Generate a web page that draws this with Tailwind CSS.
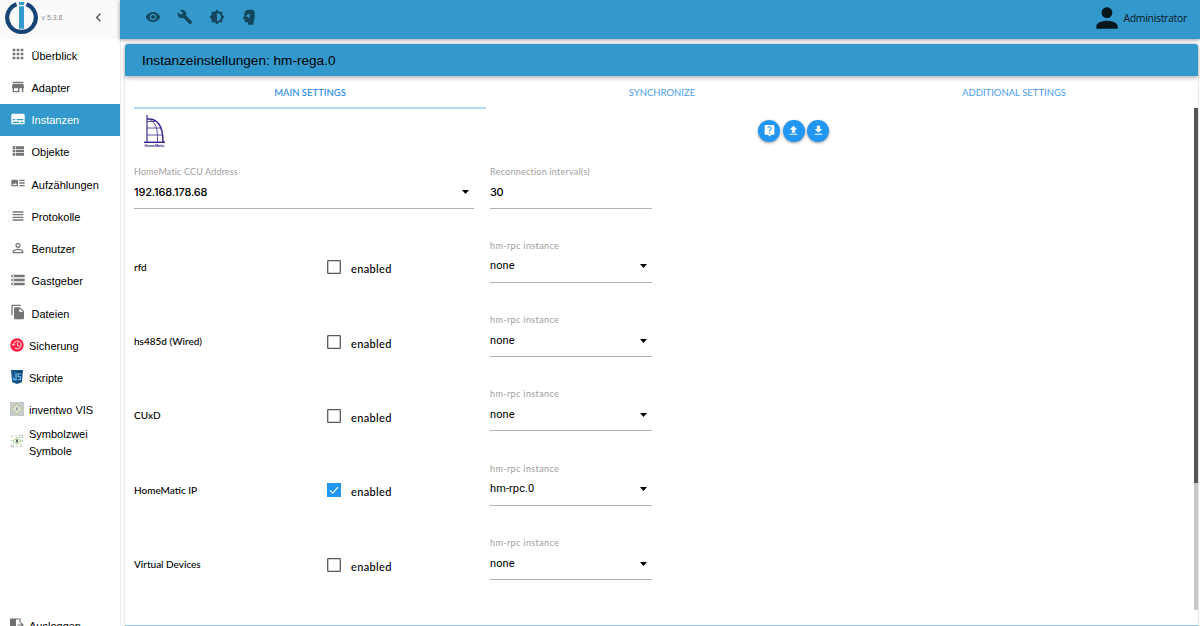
<!DOCTYPE html>
<html lang="de">
<head>
    <meta charset="UTF-8">
    <meta name="viewport" content="width=device-width, initial-scale=1.0">
    <title>ioBroker - hm-rega.0</title>
    <script src="https://cdn.jsdelivr.net/npm/@tailwindcss/browser@4"></script>
</head>
<body class="flex h-[626px] w-[1200px] overflow-hidden bg-white font-['Liberation_Sans',Arial,sans-serif] text-black">

    <!-- Sidebar -->
    <aside class="flex h-full w-[120px] shrink-0 flex-col">
        <div class="flex h-[39px] shrink-0 items-center bg-[#fafafa] pb-1 pl-[5px]">
            <svg class="h-[34px] w-[33px] shrink-0" viewBox="0 0 33 34">
                <path d="M11.5 3.2A14.3 14.3 0 1 0 21.5 3.2" fill="none" stroke="#164477" stroke-width="4.2"/>
                <path d="M14 1h5v3h-5zM14 5.2h5v22.6h-5z" fill="#3399cc"/>
            </svg>
            <span class="mt-px ml-[3.5px] text-[7px] text-[#8a8a8a]">v 5.3.8</span>
            <svg class="ml-[27px] size-[17px] fill-[#555]" viewBox="0 0 24 24"><path d="M15.41 7.41L14 6l-6 6 6 6 1.41-1.41L10.83 12z"/></svg>
        </div>

        <nav class="flex flex-col text-[11px]">
            <a class="flex h-[32.25px] items-center pt-[1.5px] pl-[10px]">
                <svg class="-mt-[3px] mr-[5.5px] size-4 fill-[#757575]" viewBox="0 0 24 24"><path d="M4 8h4V4H4v4zm6 12h4v-4h-4v4zm-6 0h4v-4H4v4zm0-6h4v-4H4v4zm6 0h4v-4h-4v4zm6-10v4h4V4h-4zm-6 4h4V4h-4v4zm6 6h4v-4h-4v4zm0 6h4v-4h-4v4z"/></svg>
                Überblick
            </a>
            <a class="flex h-[32.25px] items-center pt-[1.5px] pl-[10px]">
                <svg class="-mt-[3px] mr-[5.5px] size-4 fill-[#757575]" viewBox="0 0 24 24"><path d="M20 4H4v2h16V4zm1 10v-2l-1-5H4l-1 5v2h1v6h10v-6h4v6h2v-6h1zm-9 4H6v-4h6v4z"/></svg>
                Adapter
            </a>
            <a class="flex h-[32.25px] items-center bg-[#3399cc] pt-[1.5px] pl-[10px] text-white">
                <svg class="-mt-[3px] mr-[5.5px] size-4 fill-white" viewBox="0 0 24 24"><path d="M20 4H4c-1.1 0-2 .9-2 2v12c0 1.1.9 2 2 2h16c1.1 0 2-.9 2-2V6c0-1.1-.9-2-2-2zM4 12h4v2H4v-2zm10 6H4v-2h10v2zm6 0h-4v-2h4v2zm0-4H10v-2h10v2z"/></svg>
                Instanzen
            </a>
            <a class="flex h-[32.25px] items-center pt-[1.5px] pl-[10px]">
                <svg class="-mt-[3px] mr-[5.5px] size-4 fill-[#757575]" viewBox="0 0 24 24"><path d="M4 14h4v-4H4v4zm0 5h4v-4H4v4zM4 9h4V5H4v4zm5 5h12v-4H9v4zm0 5h12v-4H9v4zM9 5v4h12V5H9z"/></svg>
                Objekte
            </a>
            <a class="flex h-[32.25px] items-center pt-[1.5px] pl-[10px]">
                <svg class="-mt-[3px] mr-[5.5px] size-4 fill-[#757575]" viewBox="0 0 24 24"><path d="M22 13h-8v-2h8v2zm0-6h-8v2h8V7zm-8 10h8v-2h-8v2zm-2-8v6c0 1.1-.9 2-2 2H4c-1.1 0-2-.9-2-2V9c0-1.1.9-2 2-2h6c1.1 0 2 .9 2 2zm-1.5 6l-2.25-3-1.75 2.26-1.25-1.51L3.5 15h7z"/></svg>
                Aufzählungen
            </a>
            <a class="flex h-[32.25px] items-center pt-[1.5px] pl-[10px]">
                <svg class="-mt-[3px] mr-[5.5px] size-4 fill-[#757575]" viewBox="0 0 24 24"><path d="M4 15h16v-2H4v2zm0 4h16v-2H4v2zm0-8h16V9H4v2zm0-6v2h16V5H4z"/></svg>
                Protokolle
            </a>
            <a class="flex h-[32.25px] items-center pt-[1.5px] pl-[10px]">
                <svg class="-mt-[3px] mr-[5.5px] size-4 fill-[#757575]" viewBox="0 0 24 24"><path d="M12 5.9c1.16 0 2.1.94 2.1 2.1s-.94 2.1-2.1 2.1S9.9 9.16 9.9 8s.94-2.1 2.1-2.1m0 9c2.97 0 6.1 1.46 6.1 2.1v1.1H5.9V17c0-.64 3.13-2.1 6.1-2.1M12 4C9.79 4 8 5.79 8 8s1.79 4 4 4 4-1.79 4-4-1.79-4-4-4zm0 9c-2.67 0-8 1.34-8 4v3h16v-3c0-2.66-5.33-4-8-4z"/></svg>
                Benutzer
            </a>
            <a class="flex h-[32.25px] items-center pt-[1.5px] pl-[10px]">
                <svg class="-mt-[3px] mr-[5.5px] size-4 fill-[#757575]" viewBox="0 0 24 24"><path d="M2 20h20v-4H2v4zm2-3h2v2H4v-2zM2 4v4h20V4H2zm4 3H4V5h2v2zm-4 7h20v-4H2v4zm2-3h2v2H4v-2z"/></svg>
                Gastgeber
            </a>
            <a class="flex h-[32.25px] items-center pt-[1.5px] pl-[10px]">
                <svg class="-mt-[3px] mr-[5.5px] size-4 fill-[#757575]" viewBox="0 0 24 24"><path d="M16 1H4c-1.1 0-2 .9-2 2v14h2V3h12V1zm-1 4l6 6v10c0 1.1-.9 2-2 2H7.99C6.89 23 6 22.1 6 21l.01-14c0-1.1.89-2 1.99-2h7zm-1 7h5.5L14 6.5V12z"/></svg>
                Dateien
            </a>
            <a class="flex h-[32.25px] items-center pt-[1.5px] pl-[10px]">
                <svg class="-mt-[3px] mr-[5px] size-[14px]" viewBox="0 0 28 28">
                    <circle cx="14" cy="14" r="13.5" fill="#fc1c44"/>
                    <path d="M7 14a7.7 7.7 0 1 1 2.6 5.7M4 12.5l3 3 3-3M15 9.5v5l4 2.3" fill="none" stroke="#fff" stroke-width="1.8"/>
                </svg>
                Sicherung
            </a>
            <a class="flex h-[32.25px] items-center pt-[1.5px] pl-[10px]">
                <svg class="-mt-[3px] mr-[5px] size-[14px]" viewBox="0 0 28 28">
                    <path d="M2 0h24l-2.2 24.5L14 28l-9.8-3.5z" fill="#16588f"/>
                    <path d="M14 2h10l-1.8 21L14 26z" fill="#0d4577"/>
                    <path d="M12 6v13H7v-4M22 7.5h-6v5.5h5v6h-6" fill="none" stroke="#6cb5e6" stroke-width="2.5"/>
                </svg>
                Skripte
            </a>
            <a class="flex h-[32.25px] items-center pt-[1.5px] pl-[10px]">
                <svg class="-mt-[3px] mr-[5px] size-[14px]" viewBox="0 0 28 28">
                    <path d="M.5.5h27v27H.5z" fill="#cbcbcb" stroke="#adadad"/>
                    <path d="M14 4l10 10-10 10L4 14z" fill="#dfe2d9" stroke="#9bd066" stroke-width="1.5"/>
                    <path d="M13 11h2v6h-2z" fill="#666"/>
                </svg>
                inventwo VIS
            </a>
            <a class="flex h-[32.25px] items-center pt-[1.5px] pl-[10px] leading-[17px]">
                <svg class="-mt-[3px] mr-[5px] size-[14px] shrink-0" viewBox="0 0 28 28">
                    <path d="M2 3l2 3 2-3M10 4h4M19 2h6v5h-6zM2 22h5v4H2zM11 25h5M20 26l2-5 2 5M1 13h4M24 11v5" fill="none" stroke="#b5b5b5" stroke-width="1.5"/>
                    <path d="M14 7l8 7-8 7-8-7z" fill="#f2f9ea" stroke="#9bd066" stroke-width="2"/>
                    <path d="M12.5 11h3v6h-3z" fill="#333"/>
                </svg>
                <span>Symbolzwei Symbole</span>
            </a>
        </nav>

        <a class="mt-auto -mb-[16px] flex h-8 shrink-0 items-center pl-[10px] text-[11px]">
            <svg class="-mt-[3px] mr-[5px] size-[14px]" viewBox="0 0 28 28">
                <path d="M0 1h12v25H0z" fill="#707070"/>
                <path d="M12 2h8v7M20 19v6h-8M15 14h10M21 9.5l5 4.5-5 4.5" fill="none" stroke="#707070" stroke-width="2.2"/>
            </svg>
            Ausloggen
        </a>
    </aside>

    <div class="flex min-w-0 grow flex-col border-l border-[#ededed]">
        <!-- Toolbar -->
        <header class="z-10 -ml-px flex h-[39px] shrink-0 items-center bg-[#3399cc] pr-[13px] pb-[5px] pl-[24.5px] shadow-[0_1px_4px_rgba(0,0,0,0.4)]">
            <div class="flex gap-4 fill-[#14475e]">
                <svg class="size-4" viewBox="0 0 24 24"><path d="M12 4.5C7 4.5 2.73 7.61 1 12c1.73 4.39 6 7.5 11 7.5s9.27-3.11 11-7.5c-1.73-4.39-6-7.5-11-7.5zM12 17c-2.76 0-5-2.24-5-5s2.24-5 5-5 5 2.24 5 5-2.24 5-5 5zm0-8c-1.66 0-3 1.34-3 3s1.34 3 3 3 3-1.34 3-3-1.34-3-3-3z"/></svg>
                <svg class="size-4" viewBox="0 0 24 24"><path d="M22.7 19l-9.1-9.1c.9-2.3.4-5-1.5-6.9-2-2-5-2.4-7.4-1.3L9 6 6 9 1.6 4.7C.4 7.1.9 10.1 2.9 12.1c1.9 1.9 4.6 2.4 6.9 1.5l9.1 9.1c.4.4 1 .4 1.4 0l2.3-2.3c.5-.4.5-1.1.1-1.4z"/></svg>
                <svg class="size-4" viewBox="0 0 24 24"><path d="M20 15.31L23.31 12 20 8.69V4h-4.69L12 .69 8.69 4H4v4.69L.69 12 4 15.31V20h4.69L12 23.31 15.31 20H20v-4.69zM12 18V6c3.31 0 6 2.69 6 6s-2.69 6-6 6z"/></svg>
                <svg class="size-4" viewBox="0 0 24 24"><path fill-rule="evenodd" d="M11.5 1H16c3 0 4.500 2 4.500 5v6c0 2.500-.5 4-1.500 5.500V23.500h-8.500V20H8c-1.500 0-2.500-.8-2.500-2v-3H2.500L5 10V8c0-4 2.500-7 6.500-7zM8 8.500v3h2.500l1 1.500h1.500v-6h-1.500l-1 1.500z"/></svg>
            </div>
            <div class="ml-auto flex items-center font-['Open_Sans','Noto_Sans',sans-serif]">
                <svg class="mt-px size-8 fill-[#07151c]" viewBox="0 0 24 24"><path d="M12 12c2.21 0 4-1.79 4-4s-1.79-4-4-4-4 1.79-4 4 1.79 4 4 4zm0 2c-2.67 0-8 1.34-8 4v2h16v-2c0-2.66-5.33-4-8-4z"/></svg>
                <span class="mt-1 text-[10.5px] tracking-[-0.32px] text-[#07151c]">Administrator</span>
            </div>
        </header>

        <!-- Instance settings card -->
        <main class="mt-[5px] mr-[2px] ml-1 flex h-[582px] flex-col rounded-t-[3px] border-b border-[#90caf9] shadow-[0_0_2px_rgba(0,0,0,0.3)]">
            <h1 class="flex h-8 shrink-0 items-center rounded-t-[3px] bg-[#3399cc] pt-0.5 pl-[17px] text-[13.6px] shadow-[0_2px_4px_rgba(0,0,0,0.3)]">Instanzeinstellungen: hm-rega.0</h1>

            <div class="flex min-h-0 grow font-['Lato','Open_Sans',sans-serif]">
                <div class="grow pl-[9px]">
                    <div class="flex h-[33px] text-[9.5px] text-[#4b9df0]">
                        <div class="flex w-[352px] items-center justify-center border-b-2 border-[#b3dcfa] pt-[2.5px] font-medium text-[#1e88e5]">MAIN SETTINGS</div>
                        <div class="flex w-[352px] items-center justify-center pt-px">SYNCHRONIZE</div>
                        <div class="flex w-[352px] items-center justify-center pt-px">ADDITIONAL SETTINGS</div>
                    </div>

                    <div class="flex h-[51px] items-start pt-[5px] pl-[9px]">
                        <svg class="h-[34px] w-[23px] shrink-0" viewBox="0 0 23 34">
                            <g fill="none" stroke="#3a2b93">
                                <path d="M4 1v27" stroke-width="1.2"/>
                                <path d="M4 5c10-1 16 6 16 23" stroke-width="1.5"/>
                                <path d="M7 6c6 3 8 9 7.5 22M4 14h13M4 21h15M4 7.5h8" stroke-width=".8"/>
                                <path d="M1 28.3h21" stroke-width="1.5"/>
                            </g>
                            <text x="1.5" y="32.5" font-family="Liberation Sans" font-size="4" font-weight="bold" textLength="20" fill="#3a2b93">HomeMatic</text>
                        </svg>
                        <div class="mt-[5.5px] ml-[592px] flex gap-[2.7px] fill-white">
                            <button class="flex size-[22px] items-center justify-center rounded-full bg-[#2196f3] shadow-[0_1px_3px_rgba(0,0,0,0.4)]"><svg class="size-[13px]" viewBox="0 0 24 24"><path d="M19 2H5c-1.11 0-2 .9-2 2v14c0 1.1.89 2 2 2h4l3 3 3-3h4c1.1 0 2-.9 2-2V4c0-1.1-.9-2-2-2zm-6 16h-2v-2h2v2zm2.07-7.75l-.9.92C13.45 11.9 13 12.5 13 14h-2v-.5c0-1.1.45-2.1 1.17-2.83l1.24-1.26c.37-.36.59-.86.59-1.41 0-1.1-.9-2-2-2s-2 .9-2 2H8c0-2.21 1.79-4 4-4s4 1.79 4 4c0 .88-.36 1.68-.93 2.25z"/></svg></button>
                            <button class="flex size-[22px] items-center justify-center rounded-full bg-[#2196f3] shadow-[0_1px_3px_rgba(0,0,0,0.4)]"><svg class="size-[13px]" viewBox="0 0 24 24"><path d="M9 16h6v-6h4l-7-7-7 7h4zm-4 2h14v2H5z"/></svg></button>
                            <button class="flex size-[22px] items-center justify-center rounded-full bg-[#2196f3] shadow-[0_1px_3px_rgba(0,0,0,0.4)]"><svg class="size-[13px]" viewBox="0 0 24 24"><path d="M19 9h-4V3H9v6H5l7 7 7-7zM5 18v2h14v-2H5z"/></svg></button>
                        </div>
                    </div>

                    <div class="flex h-[48.7px] gap-4">
                        <div class="flex w-[340px] flex-col border-b border-[#b2b2b2] pt-[5px]">
                            <label class="text-[9px] leading-[14px] tracking-[0.15px] text-[#9e9e9e]">HomeMatic CCU Address</label>
                            <div class="mt-[5px] flex items-center justify-between pr-[5px] font-[Inter,sans-serif] text-[11px] leading-[16px] font-medium tracking-[-0.15px]">192.168.178.68
                                <svg class="h-1 w-[7px]" viewBox="0 0 7 4"><path d="M0 0h7L3.5 4z"/></svg>
                            </div>
                        </div>
                        <div class="flex w-[162px] flex-col border-b border-[#b2b2b2] pt-[5px]">
                            <label class="text-[9px] leading-[14px] tracking-[0.24px] text-[#9e9e9e]">Reconnection interval(s)</label>
                            <div class="mt-[5px] font-[Inter,sans-serif] text-[11px] leading-[16px] font-medium tracking-[-0.3px]">30</div>
                        </div>
                    </div>

                    <div id="interfaces" class="-mt-[0.5px]"></div>
                </div>

                <div class="mt-8 h-[502px] w-1 shrink-0 bg-[#c8c8c8]">
                    <div class="h-[375px] bg-[#555]"></div>
                </div>
            </div>
        </main>
    </div>

    <script>
        const interfaces = [
            { name: 'rfd', enabled: false, instance: 'none' },
            { name: 'hs485d (Wired)', enabled: false, instance: 'none' },
            { name: 'CUxD', enabled: false, instance: 'none' },
            { name: 'HomeMatic IP', enabled: true, instance: 'hm-rpc.0' },
            { name: 'Virtual Devices', enabled: false, instance: 'none' }
        ];

        const checkboxOn = '<svg class="size-[14px]" viewBox="0 0 14 14"><path d="M0 0h14v14H0z" fill="#2196f3"/><path d="M3 7.3l2.8 2.9L11 4.2" fill="none" stroke="#fff" stroke-width="1.2"/></svg>';
        const checkboxOff = '<svg class="size-[14px]" viewBox="0 0 14 14"><rect x=".7" y=".7" width="12.6" height="12.6" rx=".6" fill="none" stroke="#5a5a5a" stroke-width="1.3"/></svg>';

        document.getElementById('interfaces').innerHTML = interfaces.map(row => `
            <div class="flex h-[74.35px] items-end">
                <div class="flex h-[49px] w-[193px] items-center pt-[18px] text-[10px] font-medium">${row.name}</div>
                <div class="flex h-[49px] w-[163px] items-start pt-[26.7px]">
                    ${row.enabled ? checkboxOn : checkboxOff}
                    <span class="mt-0.5 ml-[10px] text-[11px] leading-[14px] font-medium tracking-[0.35px]">enabled</span>
                </div>
                <div class="flex h-[49px] w-[162px] flex-col border-b border-[#b2b2b2] pt-[5px]">
                    <label class="text-[9px] leading-[14px] tracking-[0.38px] text-[#9e9e9e]">hm-rpc instance</label>
                    <div class="mt-[5.7px] flex items-center justify-between pr-[5px] font-[Roboto,sans-serif] text-[11px] leading-[16px] tracking-[0.1px]">${row.instance}
                        <svg class="h-1 w-[7px]" viewBox="0 0 7 4"><path d="M0 0h7L3.5 4z"/></svg>
                    </div>
                </div>
            </div>`).join('');
    </script>
</body>
</html>
